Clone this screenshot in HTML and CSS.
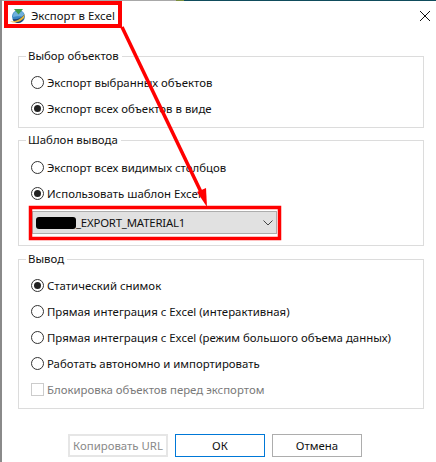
FILE: index.html
```html
<!DOCTYPE html>
<html lang="ru">
<head>
<meta charset="utf-8">
<title>Экспорт в Excel</title>
<link rel="stylesheet" href="styles.css">
</head>
<body>
<div class="window">
  <div class="topstrip"><span class="seg-gray"></span><span class="seg-green"></span><span class="seg-teal"></span></div>
  <header class="titlebar">
    <svg class="app-icon" viewBox="0 0 16 16" width="16" height="16">
      <circle cx="8.500" cy="8.500" r="6.500" fill="#3a86c4"/>
      <path d="M3.500 5c2-2 6-3 9-1 1 1 2 3 1.500 5C11 8 6 8 3 9z" fill="#6fb0dc"/>
      <path d="M2.500 11c3 1 8 0 11.500-4 1 4-2 8-6 8-2.500 0-4.500-1.500-5.500-4z" fill="#1d3f6e"/>
      <path d="M0 13.500c5 .5 11-2 15-7.500l-1 4c-3 4-9 5.500-14 3.500z" fill="#e3b53a"/>
      <path d="M4 1h9L8.500 6.500z" fill="#3f9a4a"/>
    </svg>
    <span class="title">Экспорт в Excel</span>
    <svg class="close" viewBox="0 0 10 10" width="10" height="10"><path d="M0 0l10 10M10 0L0 10" stroke="#111" stroke-width="1" fill="none"/></svg>
  </header>
  <main class="content">
    <fieldset class="group g1">
      <legend>Выбор объектов</legend>
      <label class="opt"><span class="radio"></span>Экспорт выбранных объектов</label>
      <label class="opt"><span class="radio on"></span>Экспорт всех объектов в виде</label>
    </fieldset>
    <fieldset class="group g2">
      <legend>Шаблон вывода</legend>
      <label class="opt"><span class="radio"></span>Экспорт всех видимых столбцов</label>
      <label class="opt"><span class="radio on"></span>Использовать шаблон Excel</label>
      <div class="combo">
        <span class="redact"></span><span class="combo-text">_EXPORT_MATERIAL1</span>
        <svg class="chev" viewBox="0 0 10 6" width="10" height="6"><path d="M.5.5L5 5 9.500.5" stroke="#444" fill="none"/></svg>
      </div>
    </fieldset>
    <fieldset class="group g3">
      <legend>Вывод</legend>
      <label class="opt"><span class="radio on"></span>Статический снимок</label>
      <label class="opt"><span class="radio"></span>Прямая интеграция с Excel (интерактивная)</label>
      <label class="opt"><span class="radio"></span>Прямая интеграция с Excel (режим большого объема данных)</label>
      <label class="opt"><span class="radio"></span>Работать автономно и импортировать</label>
      <label class="opt disabled"><span class="check"></span>Блокировка объектов перед экспортом</label>
    </fieldset>
    <div class="buttons">
      <button class="btn copy" disabled>Копировать URL</button>
      <button class="btn ok">ОК</button>
      <button class="btn">Отмена</button>
    </div>
  </main>
</div>
<svg class="annot" viewBox="0 0 436 462" width="436" height="462">
  <rect x="6" y="3" width="114" height="23" fill="none" stroke="#f00" stroke-width="4"/>
  <rect x="30.500" y="207.500" width="249" height="31" fill="none" stroke="#f00" stroke-width="3.500"/>
  <path d="M122 27L201 192" stroke="#f00" stroke-width="3.500" fill="none"/>
  <path d="M207 207l-10-15 9-4z" fill="#f00"/>
</svg>
</body>
</html>
```
FILE: styles.css
```css
* { box-sizing: border-box; }
html, body { margin: 0; padding: 0; }
body {
  width: 436px;
  height: 462px;
  overflow: hidden;
  background: #fff;
  font-family: "Noto Sans", "Open Sans", sans-serif;
  font-size: 11.4px;
  color: #111;
  position: relative;
}
.window {
  height: 462px;
  display: flex;
  flex-direction: column;
  border-left: 2px solid #8a8a8a;
}
.topstrip {
  height: 1px;
  flex: none;
  display: flex;
}
.seg-gray { width: 174px; background: #a8a8a8; }
.seg-green { width: 8px; background: #7a8f3c; }
.seg-teal { flex: 1; background: #0f4c5c; }
.titlebar {
  height: 29px;
  display: flex;
  align-items: center;
  padding: 0 6px 0 8px;
  flex: none;
}
.app-icon { flex: none; }
.title { margin-left: 5px; flex: 1; }
.content {
  padding: 18px 12px 0 16px;
  display: flex;
  flex-direction: column;
}
.group {
  margin: 0;
  padding: 5px 0 0 12px;
  border: 1px solid #dcdcdc;
  min-width: 0;
  display: flex;
  flex-direction: column;
}
.group legend {
  margin-left: -5px;
  padding: 0 3px 0 2px;
  line-height: 16px;
}
.g1 { height: 80px; }
.g2 { height: 114px; margin-top: 4px; padding-top: 6px; }
.g3 { height: 158px; margin-top: 5px; }
.opt {
  display: flex;
  align-items: center;
  height: 26px;
  gap: 3px;
  white-space: nowrap;
}
.radio {
  width: 13px;
  height: 13px;
  border: 1px solid #333;
  border-radius: 50%;
  background: #fff;
  flex: none;
  position: relative;
}
.radio.on::after {
  content: "";
  position: absolute;
  left: 2px;
  top: 2px;
  width: 7px;
  height: 7px;
  border-radius: 50%;
  background: #222;
}
.check {
  width: 13px;
  height: 13px;
  border: 1px solid #ccc;
  flex: none;
}
.disabled { color: #7a7a7a; }
.combo {
  width: 245px;
  height: 23px;
  margin: 5px 0 0 1px;
  background: #e1e1e1;
  border: 1px solid #adadad;
  display: flex;
  align-items: center;
  padding: 0 3px 0 3px;
}
.redact {
  width: 40px;
  height: 12px;
  border-radius: 3px;
  background: #000;
  flex: none;
}
.combo-text { flex: 1; letter-spacing: -0.2px; }
.chev { flex: none; }
.buttons {
  margin-top: 25px;
  padding-left: 50px;
  display: flex;
  gap: 7px;
}
.btn {
  width: 90px;
  height: 23px;
  padding: 0;
  background: #fff;
  border: 1px solid #adadad;
  font: inherit;
  color: #111;
}
.btn.copy {
  width: 100px;
  color: #8a8a8a;
  border: 2px solid #e6e6e6;
}
.btn.ok { border: 1px solid #0078d7; }
.annot {
  position: absolute;
  left: 0;
  top: 0;
  pointer-events: none;
}
```
